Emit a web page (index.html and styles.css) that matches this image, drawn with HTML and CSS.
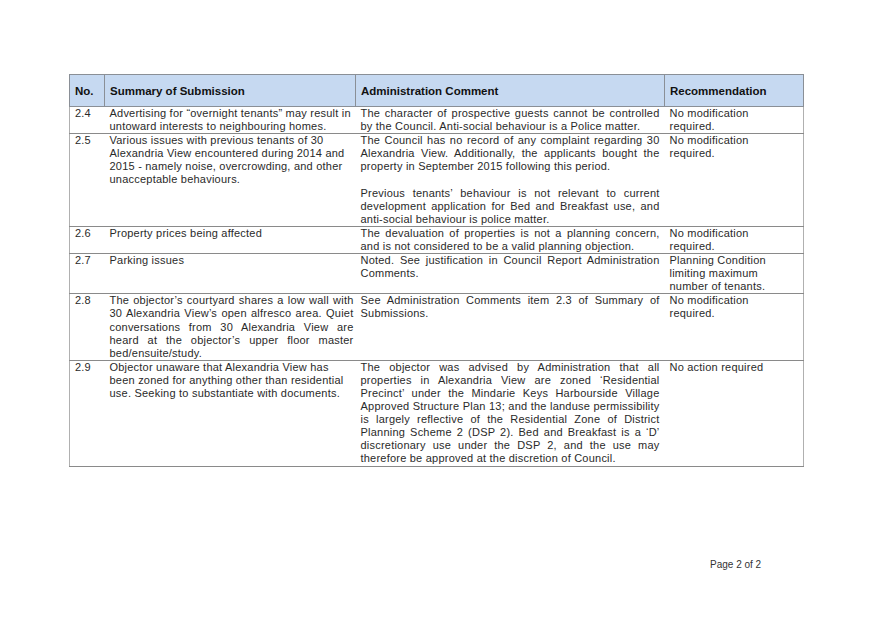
FILE: index.html
```html
<!DOCTYPE html>
<html>
<head>
<meta charset="utf-8">
<link rel="stylesheet" href="styles.css">
</head>
<body>
<div class="page">
  <table class="subs">
    <colgroup>
      <col class="c-no">
      <col class="c-sum">
      <col class="c-adm">
      <col class="c-rec">
    </colgroup>
    <thead>
      <tr>
        <th>No.</th>
        <th>Summary of Submission</th>
        <th>Administration Comment</th>
        <th>Recommendation</th>
      </tr>
    </thead>
    <tbody>
      <tr>
        <td>2.4</td>
        <td class="sum">Advertising for “overnight tenants” may result in untoward interests to neighbouring homes.</td>
        <td class="just">The character of prospective guests cannot be controlled by the Council. Anti-social behaviour is a Police matter.</td>
        <td class="rec">No modification required.</td>
      </tr>
      <tr>
        <td>2.5</td>
        <td class="sum">Various issues with previous tenants of 30 Alexandria View encountered during 2014 and 2015 - namely noise, overcrowding, and other unacceptable behaviours.</td>
        <td class="just"><p>The Council has no record of any complaint regarding 30 Alexandria View. Additionally, the applicants bought the property in September 2015 following this period.</p><p>Previous tenants’ behaviour is not relevant to current development application for Bed and Breakfast use, and anti-social behaviour is police matter.</p></td>
        <td class="rec">No modification required.</td>
      </tr>
      <tr>
        <td>2.6</td>
        <td class="sum">Property prices being affected</td>
        <td class="just">The devaluation of properties is not a planning concern, and is not considered to be a valid planning objection.</td>
        <td class="rec">No modification required.</td>
      </tr>
      <tr>
        <td>2.7</td>
        <td class="sum">Parking issues</td>
        <td class="just">Noted. See justification in Council Report Administration Comments.</td>
        <td class="rec">Planning Condition limiting maximum number of tenants.</td>
      </tr>
      <tr>
        <td>2.8</td>
        <td class="sum just">The objector’s courtyard shares a low wall with 30 Alexandria View’s open alfresco area. Quiet conversations from 30 Alexandria View are heard at the objector’s upper floor master bed/ensuite/study.</td>
        <td class="just">See Administration Comments item 2.3 of Summary of Submissions.</td>
        <td class="rec">No modification required.</td>
      </tr>
      <tr>
        <td>2.9</td>
        <td class="sum">Objector unaware that Alexandria View has been zoned for anything other than residential use. Seeking to substantiate with documents.</td>
        <td class="just">The objector was advised by Administration that all properties in Alexandria View are zoned ‘Residential Precinct’ under the Mindarie Keys Harbourside Village Approved Structure Plan 13; and the landuse permissibility is largely reflective of the Residential Zone of District Planning Scheme 2 (DSP 2). Bed and Breakfast is a ‘D’ discretionary use under the DSP 2, and the use may therefore be approved at the discretion of Council.</td>
        <td class="rec">No action required</td>
      </tr>
    </tbody>
  </table>
  <div class="footer">Page 2 of 2</div>
</div>
</body>
</html>
```

FILE: styles.css
```css
html, body {
  margin: 0;
  padding: 0;
  background: #ffffff;
}
body {
  font-family: "Liberation Sans", Arial, sans-serif;
  color: #222222;
}
.page {
  width: 876px;
  height: 619px;
  box-sizing: border-box;
  padding: 74px 0 0 69px;
  position: relative;
}
.subs {
  border-collapse: collapse;
  table-layout: fixed;
  width: 734px;
}
.c-no { width: 35px; }
.c-sum { width: 251px; }
.c-adm { width: 309px; }
.c-rec { width: 139px; }
.subs th {
  background: #c6d9f1;
  border: 1px solid #8a8f96;
  height: 31px;
  padding: 0 5px;
  text-align: left;
  vertical-align: middle;
  font-size: 11.5px;
  font-weight: bold;
  color: #111111;
}
.subs td {
  font-size: 11px;
  line-height: 13.1px;
  letter-spacing: 0.22px;
  vertical-align: top;
  padding: 0 5px 0 5px;
  border-bottom: 1px solid #8a8a8a;
  color: #2a2a2a;
}
.subs td:first-child {
  border-left: 1px solid #b0b0b0;
  padding-left: 5px;
}
.subs td:last-child {
  border-right: 1px solid #b0b0b0;
}
.subs td.sum {
  padding-right: 2px;
}
.subs td.rec {
  padding-right: 16px;
}
.subs td.just {
  text-align: justify;
}
.subs td p {
  margin: 0;
}
.subs td p + p {
  margin-top: 13.1px;
}
.footer {
  position: absolute;
  left: 710px;
  top: 559px;
  font-size: 10px;
  color: #333333;
}
```
